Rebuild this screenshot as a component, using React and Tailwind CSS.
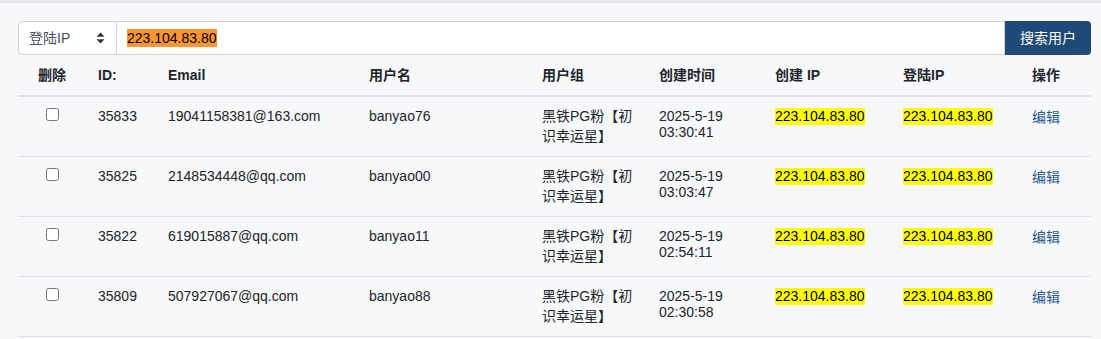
import React from "react";

const rows = [
  { id: "35833", email: "19041158381@163.com", name: "banyao76", time: "03:30:41" },
  { id: "35825", email: "2148534448@qq.com", name: "banyao00", time: "03:03:47" },
  { id: "35822", email: "619015887@qq.com", name: "banyao11", time: "02:54:11" },
  { id: "35809", email: "507927067@qq.com", name: "banyao88", time: "02:30:58" },
];

const cols = "grid grid-cols-[68px_70px_201px_173px_117px_116px_128px_129px_71px]";

export default function App() {
  return (
    <div
      className="w-[1101px] h-[339px] overflow-hidden bg-[#f7f8fa] text-[14px] text-[#212529]"
      style={{ fontFamily: '"Liberation Sans", Arial, "Noto Sans CJK SC", sans-serif' }}
    >
      <div className="h-[3px] bg-[#e5e7eb]" />
      <div className="pl-[18px] pr-[10px] pt-[18px]">
        {/* search bar */}
        <div className="flex h-[34px]">
          <div className="w-[99px] flex items-center justify-between pl-[10px] pr-[10px] bg-white border border-[#ced4da] rounded-l-[4px] text-[#495057]">
            <span>登陆IP</span>
            <svg width="9" height="12" viewBox="0 0 9 12" className="mr-[1px]">
              <path d="M4.5 0.5 L8.5 4.8 L0.5 4.8 Z" fill="#333" />
              <path d="M4.5 11.5 L8.5 7.2 L0.5 7.2 Z" fill="#333" />
            </svg>
          </div>
          <div className="flex-1 flex items-center pl-[10px] bg-white border-y border-r border-[#ced4da]">
            <span className="bg-[#ff9632] text-black leading-[18px]">223.104.83.80</span>
          </div>
          <button className="w-[86px] bg-[#1f4a78] text-white rounded-r-[4px] text-[14px]">搜索用户</button>
        </div>

        {/* header */}
        <div className={`${cols} h-[42px] border-b-2 border-[#dee2e6] font-bold items-center`}>
          <div className="text-center">删除</div>
          <div className="pl-[12px]">ID:</div>
          <div className="pl-[12px]">Email</div>
          <div className="pl-[12px]">用户名</div>
          <div className="pl-[12px]">用户组</div>
          <div className="pl-[12px]">创建时间</div>
          <div className="pl-[12px]">创建 IP</div>
          <div className="pl-[12px]">登陆IP</div>
          <div className="pl-[12px]">操作</div>
        </div>

        {rows.map((r) => (
          <div key={r.id} className={`${cols} h-[60px] border-b border-[#dee2e6] items-start`}>
            <div className="flex justify-center pt-[11px]">
              <input type="checkbox" className="w-[13px] h-[13px] m-0" />
            </div>
            <div className="pl-[12px] pt-[9px] leading-5">{r.id}</div>
            <div className="pl-[12px] pt-[9px] leading-5">{r.email}</div>
            <div className="pl-[12px] pt-[9px] leading-5">{r.name}</div>
            <div className="pl-[12px] pt-[9px] pr-[8px] leading-[20px]">黑铁PG粉【初识幸运星】</div>
            <div className="pl-[12px] pt-[11px] leading-4">
              2025-5-19
              <br />
              {r.time}
            </div>
            <div className="pl-[12px] pt-[9px] leading-5">
              <span className="bg-[#ffff00] text-black leading-[17px] inline-block">223.104.83.80</span>
            </div>
            <div className="pl-[12px] pt-[9px] leading-5">
              <span className="bg-[#ffff00] text-black leading-[17px] inline-block">223.104.83.80</span>
            </div>
            <div className="pl-[12px] pt-[10px] leading-5 text-[#29598a]">编辑</div>
          </div>
        ))}
      </div>
    </div>
  );
}
